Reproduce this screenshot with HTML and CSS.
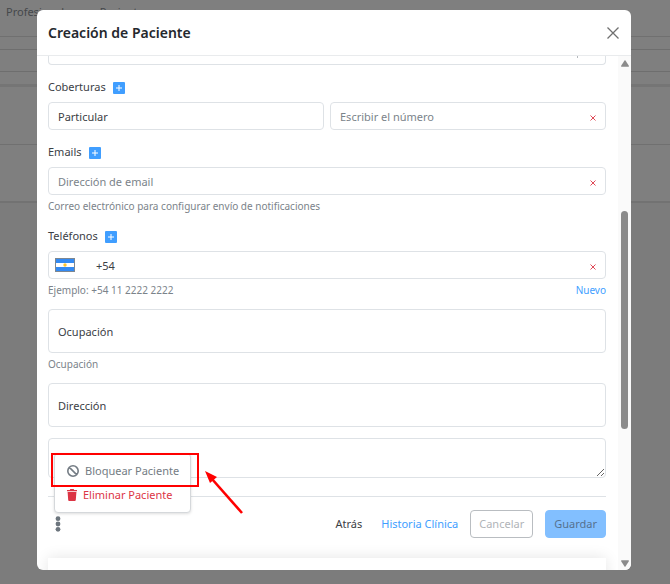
FILE: index.html
```html
<!DOCTYPE html>
<html lang="es">
<head>
<meta charset="utf-8">
<title>Creación de Paciente</title>
<link rel="stylesheet" href="styles.css">
</head>
<body>
<div class="page">
  <nav class="page-nav"><span>Profesionales</span><span>Pacientes</span></nav>
  <div class="page-gap"></div>
  <div class="page-search"></div>
  <div class="page-bar"></div>
  <div class="page-row"></div>
  <div class="page-row"></div>
</div>

<div class="backdrop">
  <div class="modal" role="dialog" aria-labelledby="title">
    <header class="modal-header">
      <h1 id="title">Creación de Paciente</h1>
      <button class="close" type="button" aria-label="Cerrar">
        <svg width="12" height="12" viewBox="0 0 12 12"><path d="M.5.5l11 11M11.5.5l-11 11"/></svg>
      </button>
    </header>
    <div class="modal-body">
      <form class="form">
        <div class="cut-field"><i></i></div>

        <div class="label-row"><label for="cover">Coberturas</label><button class="add" type="button" aria-label="Agregar cobertura"><svg width="6" height="6" viewBox="0 0 6 6"><path d="M3 0v6M0 3h6"/></svg></button></div>
        <div class="pair">
          <div class="field"><input id="cover" value="Particular"></div>
          <div class="field"><input aria-label="Número" placeholder="Escribir el número"><button class="remove" type="button" aria-label="Quitar"><svg width="6" height="6" viewBox="0 0 6 6"><path d="M.5.5l5 5M5.5.5l-5 5"/></svg></button></div>
        </div>

        <div class="label-row"><label for="email">Emails</label><button class="add" type="button" aria-label="Agregar email"><svg width="6" height="6" viewBox="0 0 6 6"><path d="M3 0v6M0 3h6"/></svg></button></div>
        <div class="field"><input id="email" type="email" placeholder="Dirección de email"><button class="remove" type="button" aria-label="Quitar"><svg width="6" height="6" viewBox="0 0 6 6"><path d="M.5.5l5 5M5.5.5l-5 5"/></svg></button></div>
        <div class="help"><span>Correo electrónico para configurar envío de notificaciones</span></div>

        <div class="label-row"><label for="phone">Teléfonos</label><button class="add" type="button" aria-label="Agregar teléfono"><svg width="6" height="6" viewBox="0 0 6 6"><path d="M3 0v6M0 3h6"/></svg></button></div>
        <div class="field">
          <button class="flag" type="button" aria-label="Argentina"><svg width="20" height="14" viewBox="0 0 20 14"><path fill="#7d8791" d="M0 0h20v14H0z"/><path fill="#fff" d="M1 1h18v12H1z"/><path fill="#338af3" d="M1 1h18v4H1zM1 9h18v4H1z"/><circle cx="10" cy="7" r="1.7" fill="#ffc52e"/></svg></button>
          <input id="phone" type="tel" value="+54"><button class="remove" type="button" aria-label="Quitar"><svg width="6" height="6" viewBox="0 0 6 6"><path d="M.5.5l5 5M5.5.5l-5 5"/></svg></button>
        </div>
        <div class="help"><span>Ejemplo: +54 11 2222 2222</span><a href="#">Nuevo</a></div>

        <input class="box" aria-label="Ocupación" placeholder="Ocupación">
        <div class="help"><span>Ocupación</span></div>
        <input class="box" aria-label="Dirección" placeholder="Dirección">
        <textarea class="notes" aria-label="Notas"></textarea>

        <footer class="actions">
          <div class="more">
            <button class="dots" type="button" aria-label="Más opciones"><svg width="6" height="16" viewBox="0 0 6 16"><circle cx="3" cy="2.7" r="2.4"/><circle cx="3" cy="8" r="2.4"/><circle cx="3" cy="13.3" r="2.4"/></svg></button>
            <div class="menu">
              <button type="button"><svg width="12" height="12" viewBox="0 0 12 12"><path fill="none" stroke="currentColor" stroke-width="1.6" d="M11.2 6A5.2 5.2 0 1 1 .8 6a5.2 5.2 0 0 1 10.4 0zM2.4 2.4l7.2 7.2"/></svg>Bloquear Paciente</button>
              <button class="danger" type="button"><svg width="10" height="12" viewBox="1 0 10 12"><path fill="currentColor" d="M1 .9h2.8L4.3 0h3.4l.5.9H11v1.4H1zM1.6 3h8.8l-.6 8.1c0 .5-.4.9-.9.9H3.1c-.5 0-.9-.4-.9-.9z"/></svg>Eliminar Paciente</button>
            </div>
            <div class="highlight"></div>
            <svg class="arrow" width="40" height="46" viewBox="0 0 40 46"><path fill="none" stroke="#f00" stroke-width="2.6" d="M7 9l30 34"/><path fill="#f00" d="M0 1l12 6-7 6z"/></svg>
          </div>
          <a class="back" href="#">Atrás</a>
          <a class="history" href="#">Historia Clínica</a>
          <button class="btn cancel" type="button">Cancelar</button>
          <button class="btn save" type="submit">Guardar</button>
        </footer>
        <div class="card"></div>
      </form>
      <div class="scrollbar" aria-hidden="true">
        <svg width="8" height="7" viewBox="0 0 8 7"><path d="M3.5.5q.5-.6 1 0L8 6q.1.7-.6.7H.6Q-.1 6.7 0 6z"/></svg>
        <div class="track"><div class="thumb"></div></div>
        <svg width="8" height="7" viewBox="0 0 8 7"><path d="M3.5 6.5q.5.6 1 0L8 1Q8.1.3 7.4.3H.6Q-.1.3 0 1z"/></svg>
      </div>
    </div>
  </div>
</div>
</body>
</html>
```
FILE: styles.css
```css
* { box-sizing: border-box; }
body {
  margin: 0;
  height: 100vh;
  overflow: hidden;
  background: #7c7c7c;
  color: #3b4045;
  font: 11px/16px "Noto Sans", "Open Sans", sans-serif;
}
button, input, textarea { font: inherit; color: inherit; margin: 0; padding: 0; border: 0; background: none; }
a { color: #409eff; text-decoration: none; }

.page { position: absolute; inset: 0; background: #7c7c7c; }
.page-nav { display: flex; gap: 24px; height: 37px; padding: 4px 6px; background: #7f7f7f; border-bottom: 1px solid #707070; color: #45484b; }
.page-gap { height: 13px; background: #7f7f7f; border-bottom: 1px solid #6e6e6e; }
.page-search { height: 22px; background: #7f7f7f; border-bottom: 1px solid #6e6e6e; }
.page-bar { height: 15px; border-bottom: 3px solid #757575; background: #7f7f7f; }
.page-row { height: 58px; background: #7f7f7f; border-bottom: 1px solid #707070; }
.page-row:last-child { border-bottom: 2px solid #727272; }

.backdrop { position: absolute; inset: 0; display: flex; padding: 10px 39px 14px 37px; }
.modal { flex: 1; min-width: 0; display: flex; flex-direction: column; overflow: hidden; background: #fff; border-radius: 6px; }
.modal-header { display: flex; flex: none; align-items: center; justify-content: space-between; height: 46px; padding: 0 12px 0 11px; border-bottom: 1px solid #e9ebed; }
h1 { margin: 0; font-size: 14px; line-height: 20px; font-weight: 600; color: #24282d; }
.close { display: flex; }
.close svg { fill: none; stroke: #707070; stroke-width: 1.3; }
.modal-body { flex: 1; min-height: 0; display: flex; }
.form { flex: 1; min-width: 0; padding: 0 12px 0 11px; overflow: hidden; }

.cut-field { display: flex; justify-content: flex-end; height: 9px; padding-right: 27px; border: 1px solid #dee2e6; border-top: 0; border-radius: 0 0 4px 4px; }
.cut-field i { width: 1px; height: 2px; background: #b5b9bd; }
.label-row { display: flex; align-items: center; gap: 7px; height: 20px; margin: 12px 0 5px; }
.add { display: flex; align-items: center; justify-content: center; width: 12px; height: 12px; margin-top: 2px; border-radius: 1px; background: #409eff; }
.add svg { stroke: #fff; stroke-width: 1; }
.pair { display: grid; grid-template-columns: 1fr 1fr; gap: 6px; }
.field { display: flex; align-items: center; height: 28px; padding: 0 9px; border: 1px solid #dee2e6; border-radius: 4px; }
.field input { flex: 1; min-width: 0; height: 26px; outline: 0; }
.field input::placeholder { color: #7b838a; opacity: 1; }
.remove { display: flex; margin-top: 3px; }
.remove svg { fill: none; stroke: #e04a58; stroke-width: 1; }
.flag { display: flex; margin: 0 21px 0 -3px; }
.help { display: flex; justify-content: space-between; margin-top: 3px; color: #7b838a; font-size: 10px; }
.box { display: block; width: 100%; height: 44px; margin-top: 11px; padding: 0 9px; border: 1px solid #dee2e6; border-radius: 4px; }
.box::placeholder { color: #3b4045; opacity: 1; }
.notes { display: block; width: 100%; height: 40px; margin-top: 11px; padding: 6px 9px; border: 1px solid #dee2e6; border-radius: 4px; resize: vertical; }

.actions { display: flex; align-items: center; margin-top: 18px; padding-top: 13px; border-top: 1px solid #dee2e6; }
.more { position: relative; margin: 0 auto 0 7px; }
.dots { display: flex; }
.dots svg { fill: #6c757d; }
.menu { position: absolute; left: -1px; bottom: 19px; width: 137px; height: 60px; padding: 5px 12px; border: 1px solid #d5d8db; border-radius: 4px; background: #fff; box-shadow: 0 1px 3px #0002; }
.menu button { display: flex; align-items: center; gap: 6px; height: 24px; color: #747c84; white-space: nowrap; }
.menu .danger { color: #dc3545; }
.highlight { position: absolute; left: -4px; bottom: 45px; width: 148px; height: 34px; border: 2px solid #f00; }
.arrow { position: absolute; left: 150px; bottom: 16px; }
.back { margin-right: 19px; color: #3b4045; }
.history { margin-right: 12px; }
.btn { height: 28px; padding: 0 8px; border: 1px solid #b9bdc1; border-radius: 4px; color: #b0b4b8; }
.save { margin-left: 12px; border-color: #82bfff; background: #82bfff; color: #55718f; }
.card { height: 60px; margin-top: 20px; background: #fff; box-shadow: 0 0 14px #0000001c; }

.scrollbar { flex: none; display: flex; flex-direction: column; align-items: center; width: 13px; padding: 4px 0 3px; background: #fafafa; }
.scrollbar svg { flex: none; fill: #8b8b8b; }
.track { flex: 1; display: flex; flex-direction: column; }
.track::before { content: ""; flex: 144; }
.track::after { content: ""; flex: 131; }
.thumb { flex: 218; width: 7px; border-radius: 4px; background: #8b8b8b; }
```
